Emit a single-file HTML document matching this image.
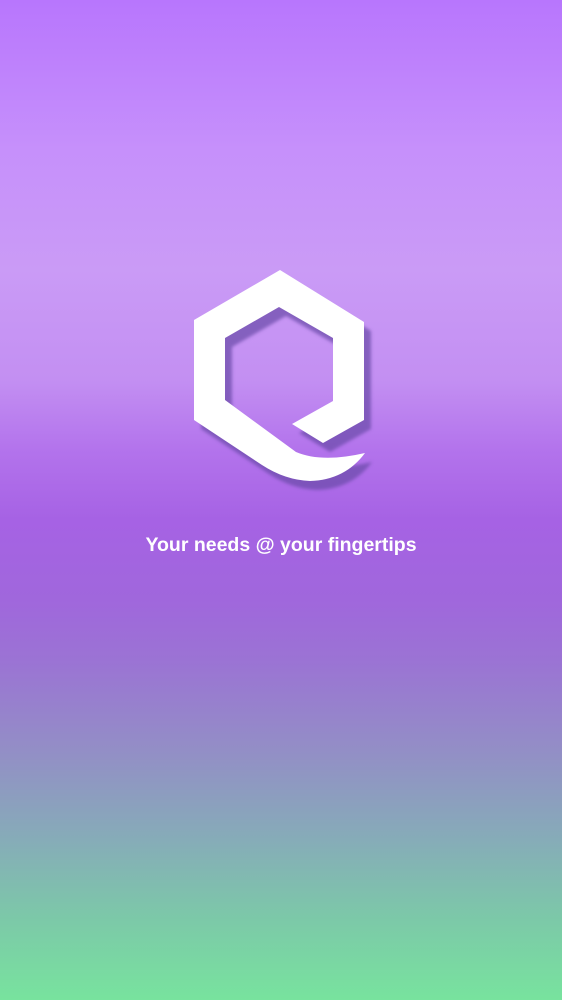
<!DOCTYPE html>
<html><head><meta charset="utf-8"><style>
html,body{margin:0;padding:0;}
body{width:562px;height:1000px;overflow:hidden;position:relative;
background:linear-gradient(to bottom,#b876fd 0%,#c690fb 15%,#ca9bf6 27%,#c38ff2 38%,#b373ec 45%,#a662e4 52%,#a067dc 60%,#9b73d4 66%,#938ec6 75%,#86acb8 84%,#7cc9a8 92%,#78e39e 100%);
font-family:"Liberation Sans",sans-serif;}
svg{position:absolute;left:0;top:0;}
.t{position:absolute;left:0;width:562px;top:534px;text-align:center;color:#fff;font-weight:bold;font-size:19.5px;}
</style></head><body>
<svg width="562" height="1000" viewBox="0 0 562 1000">
<defs><filter id="b" x="-20%" y="-20%" width="150%" height="150%"><feGaussianBlur stdDeviation="1.5"/></filter>
<path id="q" d="M280,270 L364,322 L364,420 L323,443 L292,424 L333,401 L333,338 L279,307 L225,338 L225,400 L296,452 Q322,463 365,453 Q345,480 310,481 Q285,480 262,465 L194,420 L194,320 Z"/></defs>
<use href="#q" transform="translate(7,9)" fill="#6a4aa8" fill-opacity="0.7" filter="url(#b)"/>
<use href="#q" fill="#fff"/>
</svg>
<div class="t">Your needs @ your fingertips</div>
</body></html>
